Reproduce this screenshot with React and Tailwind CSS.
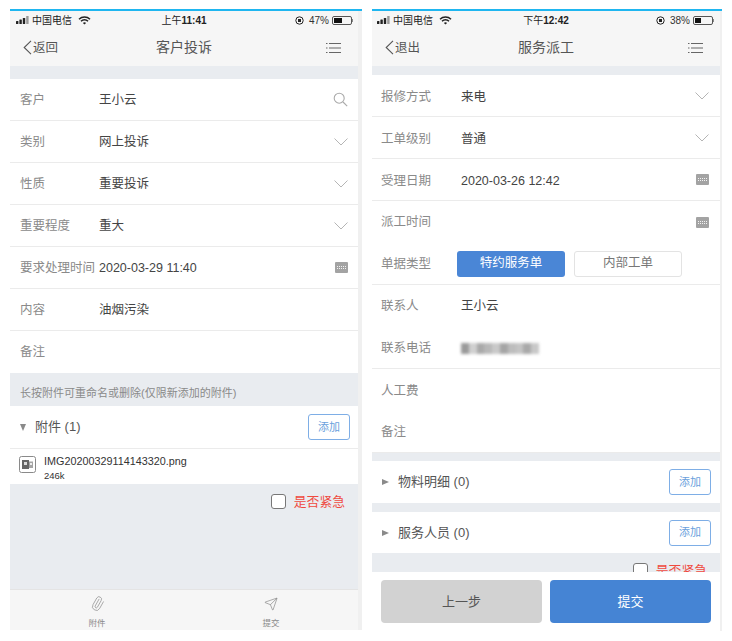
import { Paperclip, Send } from 'lucide-react';

const blurredPhone = ['#9a9a9a', '#d0d0d0', '#a9a9a9', '#b8b8b8', '#c9c9c9', '#a5a5a5', '#bdbdbd', '#c4c4c4', '#a9a9a9', '#c8c8c8'];

function SignalIcon() {
  return (
    <svg width="15" height="8" viewBox="0 0 15 8" fill="#222">
      <rect x="0" y="5" width="2.4" height="3" rx="0.5" />
      <rect x="3.4" y="3.5" width="2.4" height="4.5" rx="0.5" />
      <rect x="6.8" y="2" width="2.4" height="6" rx="0.5" />
      <rect x="10.2" y="0" width="2.4" height="8" rx="0.5" fill="#999" />
    </svg>
  );
}

function WifiIcon() {
  return (
    <svg width="13" height="9" viewBox="0 0 13 9" fill="none" stroke="#222" strokeWidth="1.5">
      <path d="M1 3.2a8 8 0 0 1 11 0" />
      <path d="M3 5.3a5 5 0 0 1 7 0" />
      <path d="M6.500 8.600 4.900 7a2.400 2.400 0 0 1 3.200 0z" fill="#222" stroke="none" />
    </svg>
  );
}

function LockIcon() {
  return (
    <svg width="9" height="9" viewBox="0 0 9 9" fill="none" stroke="#222">
      <circle cx="4.5" cy="4.5" r="3.7" />
      <rect x="3" y="3" width="3" height="3" fill="#222" stroke="none" />
    </svg>
  );
}

function BatteryIcon({ level }) {
  return (
    <div className="flex items-center">
      <div className="h-[9px] w-[20px] rounded-[2px] border border-[#555] p-[1px]">
        <div className="h-full bg-[#111]" style={{ width: `${level}%` }}></div>
      </div>
      <div className="h-[3px] w-[1px] bg-[#888]"></div>
    </div>
  );
}

function MenuIcon() {
  return (
    <svg width="15" height="12" viewBox="0 0 15 12" stroke="#666" strokeWidth="1">
      <path d="M0 1.500h1.500M3 1.500h12M0 6h1.500M3 6h12M0 10.500h1.500M3 10.500h12" />
    </svg>
  );
}

function Chevron() {
  return (
    <svg width="14" height="8" viewBox="0 0 14 8" fill="none" stroke="#b5b5b5" strokeWidth="1">
      <path d="M0.500 0.500 7 7l6.500-6.500" />
    </svg>
  );
}

function SearchIcon() {
  return (
    <svg width="15" height="15" viewBox="0 0 15 15" fill="none" stroke="#aaa" strokeWidth="1.1">
      <circle cx="6.200" cy="6.200" r="5" />
      <path d="m10 10 4.200 4.200" />
    </svg>
  );
}

function KeyboardIcon() {
  return (
    <svg width="13" height="11" viewBox="0 0 13 11">
      <rect width="13" height="11" rx="1" fill="#a3a3a3" />
      <path d="M2 4.500h9M2 6.500h9" stroke="#f2f2f2" strokeWidth="1" strokeDasharray="1 1" />
    </svg>
  );
}

function FileIcon() {
  return (
    <svg width="17" height="17" viewBox="0 0 17 17" fill="none">
      <rect x="0.500" y="0.500" width="16" height="16" rx="2" stroke="#8a8a8a" />
      <rect x="3" y="4" width="7" height="9" fill="#666" />
      <rect x="10" y="5.500" width="4" height="6.500" fill="#a5a5a5" />
      <rect x="5" y="6" width="3" height="3" fill="#ddd" />
      <rect x="11" y="7" width="2" height="2" fill="#eee" />
    </svg>
  );
}

function StatusBar({ carrier, period, clock, percent, level, pad }) {
  return (
    <div className={`relative flex h-[20px] items-center justify-between pb-[2px] text-[10px] text-[#222] ${pad}`}>
      <div className="flex items-center gap-[3px]">
        <SignalIcon />
        <span className="-ml-[2px]">{carrier}</span>
        <span className="ml-[3px]">
          <WifiIcon />
        </span>
      </div>
      <span className="absolute inset-x-0 text-center">
        {period}
        <span className="font-semibold">{clock}</span>
      </span>
      <div className="flex items-center gap-[5px] text-[#333]">
        <LockIcon />
        <span>{percent}</span>
        <span className="-ml-[2px]">
          <BatteryIcon level={level} />
        </span>
      </div>
    </div>
  );
}

function NavBar({ back, title }) {
  return (
    <div className="relative flex h-[35px] items-center justify-between pb-[2px] pl-[13px] pr-[17px] text-[#555]">
      <div className="flex items-center gap-[1px] text-[12.5px]">
        <svg width="9" height="15" viewBox="0 0 9 15" fill="none" stroke="#555" strokeWidth="1.100">
          <path d="M8 0.800 1.200 7.500 8 14.200" />
        </svg>
        <span className="pt-[2px]">{back}</span>
      </div>
      <span className="absolute inset-x-0 text-center text-[14px]">{title}</span>
      <MenuIcon />
    </div>
  );
}

function Row({ label, value, icon, border = true, labelWidth = 'w-[79px]', offset = 'pt-[2px]', pad = 'pl-[10px] pr-[10px]' }) {
  return (
    <div className={`flex h-[42px] items-center justify-between bg-white ${pad} ${border ? 'border-b border-[#ebebeb]' : ''}`}>
      <div className={`flex items-center ${offset}`}>
        <span className={`${labelWidth} whitespace-nowrap text-[12.5px] text-[#8a8a8a]`}>{label}</span>
        {value && <span className="text-[12.5px] text-[#444]">{value}</span>}
      </div>
      {icon}
    </div>
  );
}

function AddButton() {
  return (
    <button type="button" className="flex h-[26px] w-[42px] items-center justify-center rounded-[3px] border border-[#7eaee6] bg-white text-[11px] text-[#6a9fdc]">
      添加
    </button>
  );
}

function Section({ title, open, height = 'h-[42px]', pad = 'pr-[8px]' }) {
  return (
    <div className={`flex items-center justify-between bg-white pl-[10px] ${pad} ${height}`}>
      <div className="flex items-center gap-[9px] text-[13px] text-[#555]">
        {open ? (
          <span className="h-0 w-0 border-x-[3.500px] border-t-[7px] border-x-transparent border-t-[#8a8a8a]"></span>
        ) : (
          <span className="h-0 w-0 border-y-[3.500px] border-l-[7px] border-y-transparent border-l-[#8a8a8a]"></span>
        )}
        <span>{title}</span>
      </div>
      <AddButton />
    </div>
  );
}

function Urgent() {
  return (
    <div className="flex items-center justify-end gap-[8px] pr-[13px]">
      <span className="h-[15px] w-[15px] rounded-[3px] border border-[#777] bg-white"></span>
      <span className="text-[12.8px] text-[#ef4a3f]">是否紧急</span>
    </div>
  );
}

function ComplaintPhone() {
  return (
    <div className="ml-[10px] h-[621px] w-[352px] border-t-2 border-[#1fb6f0] bg-[#f0f0f0] pr-[4px]">
      <div className="flex h-full flex-col bg-[#e9ecf0]">
        <div className="bg-[#f6f6f6]">
          <StatusBar carrier="中国电信" period="上午" clock="11:41" percent="47%" level={48} pad="pl-[6px] pr-[5px]" />
          <NavBar back="返回" title="客户投诉" />
        </div>
        <div className="mt-[13px]">
          <Row label="客户" value="王小云" icon={<SearchIcon />} />
          <Row label="类别" value="网上投诉" icon={<Chevron />} />
          <Row label="性质" value="重要投诉" icon={<Chevron />} />
          <Row label="重要程度" value="重大" icon={<Chevron />} />
          <Row label="要求处理时间" value="2020-03-29 11:40" icon={<KeyboardIcon />} />
          <Row label="内容" value="油烟污染" />
          <Row label="备注" border={false} offset="pt-px" />
        </div>
        <p className="flex h-[33px] items-end pb-[5px] pl-[10px] text-[11px] text-[#8a8a8a]">长按附件可重命名或删除(仅限新添加的附件)</p>
        <Section title="附件 (1)" open />
        <div className="flex h-[36px] items-start gap-[8px] border-t border-[#ebebeb] bg-white pl-[9px] pt-[7px]">
          <FileIcon />
          <div className="-mt-px flex flex-col text-[#333]">
            <span className="text-[10.8px] leading-[13px]">IMG20200329114143320.png</span>
            <span className="mt-[3px] text-[9.500px] leading-[10px]">246k</span>
          </div>
        </div>
        <div className="mt-[8px]">
          <Urgent />
        </div>
        <div className="mt-auto flex h-[41px] border-t border-[#e4e4e4] bg-[#f6f6f6] text-[8.500px] text-[#8a8a8a]">
          <div className="flex flex-1 flex-col items-center pt-[6px]">
            <Paperclip size={19} strokeWidth={1} color="#888" className="rotate-[-15deg]" />
            <span className="mt-[6px]">附件</span>
          </div>
          <div className="flex flex-1 flex-col items-center pt-[7px]">
            <Send size={18} strokeWidth={1} color="#777" />
            <span className="mt-[6px]">提交</span>
          </div>
        </div>
      </div>
    </div>
  );
}

function DispatchPhone() {
  const pad = 'pl-[9px] pr-[11px]';
  return (
    <div className="ml-[10px] h-[622px] w-[350px] border-t-2 border-[#1fb6f0] bg-[#f0f0f0] pr-[2px]">
      <div className="flex h-full flex-col overflow-hidden bg-[#e9ecf0]">
        <div className="bg-[#f6f6f6]">
          <StatusBar carrier="中国电信" period="下午" clock="12:42" percent="38%" level={38} pad="pl-[5px] pr-[6px]" />
          <NavBar back="退出" title="服务派工" />
        </div>
        <div className="mt-[9px]">
          <Row label="报修方式" value="来电" icon={<Chevron />} offset="pt-[4px]" pad={pad} labelWidth="w-[80px]" />
          <Row label="工单级别" value="普通" icon={<Chevron />} offset="pt-[4px]" pad={pad} labelWidth="w-[80px]" />
          <Row label="受理日期" value="2020-03-26 12:42" icon={<KeyboardIcon />} offset="pt-[4px]" pad={pad} labelWidth="w-[80px]" />
          <Row label="派工时间" icon={<KeyboardIcon />} border={false} offset="pt-px" pad={pad} />
          <div className="flex h-[42px] items-center border-b border-[#ebebeb] bg-white pl-[9px]">
            <span className="w-[76px] pt-[2px] text-[12.5px] text-[#8a8a8a]">单据类型</span>
            <div className="flex gap-[9px] text-[12.5px]">
              <span className="flex h-[26px] w-[108px] items-center justify-center rounded-[3px] bg-[#4a86d6] text-white">特约服务单</span>
              <span className="flex h-[26px] w-[108px] items-center justify-center rounded-[3px] border border-[#e3e3e3] text-[#777]">内部工单</span>
            </div>
          </div>
          <Row label="联系人" value="王小云" border={false} labelWidth="w-[80px]" offset="pt-px" pad={pad} />
          <div className="flex h-[42px] items-center border-b border-[#ebebeb] bg-white pl-[9px] pt-[2px]">
            <span className="w-[80px] text-[12.5px] text-[#8a8a8a]">联系电话</span>
            <div className="flex h-[11px] w-[78px] blur-[1.500px]">
              {blurredPhone.map((color, i) => (
                <span key={i} className="h-full flex-1" style={{ backgroundColor: color }}></span>
              ))}
            </div>
          </div>
          <Row label="人工费" border={false} offset="pt-[2px]" pad={pad} />
          <div className="h-[41px]">
            <Row label="备注" offset="pt-px" pad={pad} />
          </div>
        </div>
        <div className="mt-[9px]">
          <Section title="物料明细 (0)" pad="pr-[9px]" />
        </div>
        <div className="mt-[9px]">
          <Section title="服务人员 (0)" height="h-[41px]" pad="pr-[9px]" />
        </div>
        <div className="mt-[8px] h-[11px] shrink-0 overflow-hidden">
          <Urgent />
        </div>
        <div className="flex h-[59px] shrink-0 gap-[8px] bg-white px-[9px] pt-[8px]">
          <button type="button" className="h-[43px] flex-1 rounded-[4px] bg-[#d2d2d2] text-[13px] text-[#555]">上一步</button>
          <button type="button" className="h-[43px] flex-1 rounded-[4px] bg-[#4584d4] text-[13px] text-white">提交</button>
        </div>
      </div>
    </div>
  );
}

export default function App() {
  return (
    <div className="flex h-[641px] w-[732px] items-start bg-white pt-[9px] font-['Liberation_Sans','Noto_Sans_CJK_SC',sans-serif]">
      <ComplaintPhone />
      <DispatchPhone />
    </div>
  );
}
